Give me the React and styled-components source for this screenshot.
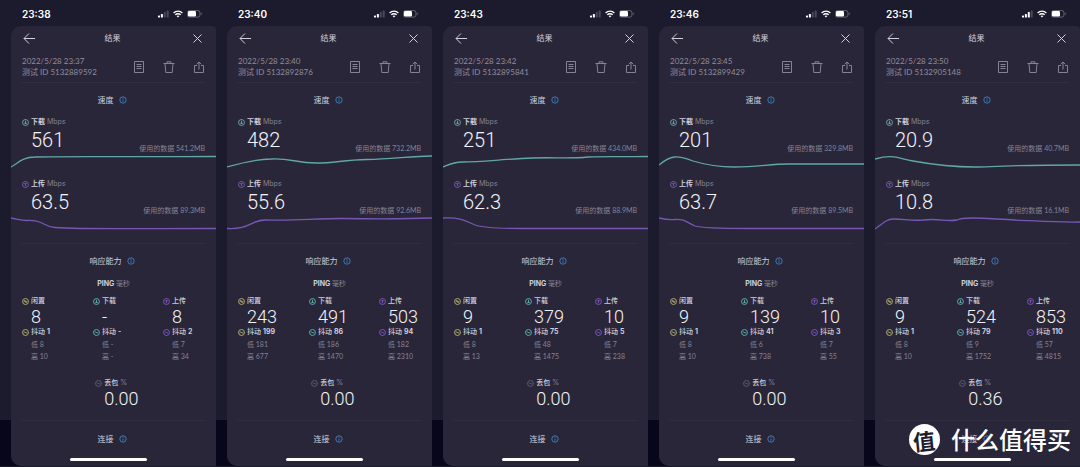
import React from "react";
import styled, { createGlobalStyle } from "styled-components";

const Global = createGlobalStyle`
  *, *::before, *::after { box-sizing: border-box; }
  body { margin: 0; background: #1c1a2d; }
  h1, h2, h3, p { margin: 0; font-weight: inherit; font-size: inherit; }
  button { border: 0; padding: 0; background: none; color: inherit; font: inherit; display: flex; cursor: pointer; }
`;

const Page = styled.main`
  position: relative;
  display: grid;
  grid-template-columns: repeat(5, 1fr);
  overflow: hidden;
  font-family: Lato, "Noto Sans CJK SC", sans-serif;
  font-size: 7px;
  line-height: 12px;
  color: #d0cfda;
  background: linear-gradient(to top, #08061a 46px, #1c1a2d 46px);
`;

const Phone = styled.section`
  display: flex;
  flex-direction: column;
  padding-left: 11px;
`;

const StatusBar = styled.header`
  display: flex;
  align-items: center;
  justify-content: space-between;
  height: 26px;
  padding: 2px 14px 0 11px;
  color: #fff;
  font: 600 10px/14px Inter, sans-serif;
`;

const StatusIcons = styled.div`
  display: flex;
  align-items: center;
  gap: 4px;
`;

const Card = styled.article`
  background: #292639;
  border-radius: 10px 4px 0 10px;
`;

const TitleBar = styled.div`
  display: grid;
  grid-template-columns: 1fr auto 1fr;
  align-items: center;
  height: 24px;
  padding: 0 14px 0 12px;
  font-size: 8px;

  button:last-child { justify-self: end; }
`;

const Meta = styled.div`
  display: flex;
  justify-content: space-between;
  align-items: center;
  margin: 0 11px;
  height: 33px;
  padding-top: 2px;
  border-bottom: 1px solid #312e42;
  color: #8f8d9e;
  font-size: 8px;
  line-height: 11px;
`;

const Tools = styled.div`
  display: flex;
  gap: 18px;
`;

const Heading = styled.h2`
  display: flex;
  align-items: center;
  justify-content: center;
  gap: 5px;
  height: ${(p) => p.$height}px;
  padding-right: 3px;
  font-size: 8px;
`;

const Speed = styled.section`
  height: 62px;
`;

const Label = styled.h3`
  display: flex;
  align-items: center;
  gap: 2px;
  font-family: Inter, "Noto Sans CJK SC", sans-serif;
  font-weight: ${(p) => (p.$strong ? 700 : 500)};
  white-space: nowrap;

  b { font-weight: 700; }
  span { color: #858394; font-weight: 400; }
`;

const SpeedLabel = styled(Label)`
  padding-left: 11px;
`;

const Figure = styled.p`
  font-family: Roboto, sans-serif;
  font-weight: 300;
  font-size: ${(p) => (p.$large ? 20 : 18)}px;
  line-height: ${(p) => (p.$large ? 24 : 19)}px;
  color: #f4f4f8;
`;

const Reading = styled.div`
  display: flex;
  justify-content: space-between;
  height: 26px;
  padding: 0 11px 0 20px;
`;

const Used = styled.p`
  align-self: flex-end;
  color: #858394;
`;

const Chart = styled.svg`
  display: block;
  width: 100%;
  height: 18px;
`;

const Section = styled.section`
  margin: 0 11px;
  border-top: 1px solid #312e42;
`;

const Responsiveness = styled(Section)`
  margin-top: 3px;
`;

const PingTitle = styled.h3`
  padding-bottom: 5px;
  text-align: center;
  font-family: Inter, "Noto Sans CJK SC", sans-serif;
  font-weight: 700;

  span { color: #858394; font-weight: 400; }
`;

const PingGrid = styled.div`
  display: grid;
  grid-template-columns: 71fr 70fr 42fr;
`;

const Detail = styled.div`
  padding-left: 9px;
`;

const Range = styled.p`
  color: #858394;
`;

const Loss = styled.div`
  width: max-content;
  margin: 15px 0 0 40%;
  padding-bottom: 12px;
`;

const Footer = styled.footer`
  position: relative;
  height: 46px;
`;

const HomeBar = styled.div`
  position: absolute;
  left: 50%;
  bottom: 5px;
  width: 77px;
  height: 3px;
  margin-left: -44px;
  border-radius: 2px;
  background: #fff;
`;

const Watermark = styled.div`
  position: absolute;
  right: 9px;
  bottom: 11px;
  display: flex;
  align-items: center;
  gap: 11px;
  color: #fff;
  font: 500 24px/32px "Noto Sans CJK SC", sans-serif;
`;

const Seal = styled.span`
  display: grid;
  place-items: center;
  width: 31px;
  height: 31px;
  border-radius: 50%;
  background: #fff;
  color: #201d30;
  font-size: 22px;

  b { transform: rotate(-6deg); font-weight: 700; }
`;

const TEAL = "#6cc5c1";
const PURPLE = "#8a62d0";
const YELLOW = "#d0cc76";

const marks = {
  down: "M4 2v3.6M2.5 4.3 4 5.8 5.5 4.3",
  up: "M4 6V2.4M2.5 3.7 4 2.2 5.5 3.7",
  idle: "M2.2 4.6 3.2 2.6 4.8 5.4 5.8 3.4",
  jitter: "M1.8 4.2 3 3.5 4.8 4.6 6.2 3.8",
};

function Mark({ kind, color }) {
  return (
    <svg width="7" height="7" viewBox="0 0 8 8" fill="none" stroke={color} strokeWidth="0.9" aria-hidden="true">
      <circle cx="4" cy="4" r="3.4" />
      <path d={marks[kind]} />
    </svg>
  );
}

function Info() {
  return (
    <svg width="8" height="8" viewBox="0 0 8 8" fill="none" stroke="#3f83bd" strokeWidth="0.9" aria-hidden="true">
      <circle cx="4" cy="4" r="3.2" />
      <path d="M4 3.6v2.2M4 2.1v.8" />
    </svg>
  );
}

function Signal({ bars }) {
  return (
    <svg width="11" height="8" viewBox="0 0 11 8" aria-hidden="true">
      {[2, 3.5, 5.5, 7].map((h, i) => (
        <rect key={h} x={i * 2.9} y={7.5 - h} width="2" height={h} rx="0.5" fill={i < bars ? "#fff" : "#4a4859"} />
      ))}
    </svg>
  );
}

function Wifi() {
  return (
    <svg width="10" height="8" viewBox="0 0 10 8" fill="none" stroke="#fff" strokeWidth="1.3" aria-hidden="true">
      <path d="M.6 3a6.2 6.2 0 0 1 8.8 0M2.3 4.9a3.8 3.8 0 0 1 5.4 0" />
      <path d="M3.6 6.100 5 7.6 6.4 6.100A2 2 0 0 0 3.6 6.100Z" fill="#fff" stroke="none" />
    </svg>
  );
}

function Battery({ level }) {
  return (
    <svg width="15" height="8" viewBox="0 0 15 8" aria-hidden="true">
      <rect x=".5" y=".5" width="12.4" height="6.6" rx="2" fill="none" stroke="#74727f" strokeWidth=".8" />
      <rect x="1" y="1" width={level} height="5.6" rx="1.3" fill="#fff" />
      <path d="M13.8 2.6v2.4q1-.4 1-1.2t-1-1.2" fill="#74727f" />
    </svg>
  );
}

function Glyph({ d, width, height, weight = 1 }) {
  return (
    <svg width={width} height={height} viewBox={`0 0 ${width} ${height}`} fill="none" stroke="currentColor" strokeWidth={weight} aria-hidden="true">
      <path d={d} />
    </svg>
  );
}

function SpeedRow({ up, value, used, line }) {
  const color = up ? PURPLE : TEAL;
  return (
    <Speed>
      <SpeedLabel $strong>
        <Mark kind={up ? "up" : "down"} color={color} />
        {up ? "上传" : "下载"}
        <span>Mbps</span>
      </SpeedLabel>
      <Reading>
        <Figure $large>{value}</Figure>
        <Used>使用的数据 {used}MB</Used>
      </Reading>
      <Chart viewBox="0 0 205 18" preserveAspectRatio="none" aria-hidden="true">
        <path d={line} fill="none" stroke={color} strokeWidth="1.3" opacity="0.82" />
      </Chart>
    </Speed>
  );
}

const pingKinds = [
  { name: "闲置", kind: "idle", color: YELLOW },
  { name: "下载", kind: "down", color: TEAL },
  { name: "上传", kind: "up", color: PURPLE },
];

const results = [
  {
    clock: "23:38", bars: 2, date: "2022/5/28 23:37", id: "5132889592",
    down: ["561", "541.2", "M0 13C7 9 12 3 24 3C60 2 120 3 205 2.5"],
    up: ["63.5", "89.3", "M0 2C6 3 10 4.500 16 4.500C22 4 26 5 30 6.500C35 9 37 11 44 11.500C70 13.500 130 12.500 205 12.500"],
    ping: [["8", "1", "8", "10"], ["-", "-", "-", "-"], ["8", "2", "7", "34"]], loss: "0.00",
  },
  {
    clock: "23:40", bars: 2, date: "2022/5/28 23:40", id: "5132892876",
    down: ["482", "732.2", "M0 13C14 9 30 5 44 5C64 4 68 9 90 9C108 9 116 6 140 5.500C165 5 185 2 205 2"],
    up: ["55.6", "92.6", "M0 12.500C22 14 24 4 38 4C70 5 85 2.500 115 2.500C150 3 180 3 205 2"],
    ping: [["243", "199", "181", "677"], ["491", "86", "186", "1470"], ["503", "94", "182", "2310"]], loss: "0.00",
  },
  {
    clock: "23:43", bars: 2, date: "2022/5/28 23:42", id: "5132895841",
    down: ["251", "434.0", "M0 13C7 10 10 8 20 8C40 8 60 5 90 4C110 3 125 5 145 3C165 2 185 3 205 2.500"],
    up: ["62.3", "88.9", "M0 2C20 1 24 6 32 9C40 12 55 12.500 80 12.500H205"],
    ping: [["9", "1", "8", "13"], ["379", "75", "48", "1475"], ["10", "5", "7", "238"]], loss: "0.00",
  },
  {
    clock: "23:46", bars: 2, date: "2022/5/28 23:45", id: "5132899429",
    down: ["201", "329.8", "M0 11C12 1 18 1 34 7C44 10 60 13 75 13C100 13 110 10 130 10H205"],
    up: ["63.7", "89.5", "M0 2C8 4 12 4 16 3.500C26 3 27 6 36 10C42 12 70 12.500 90 12.500H205"],
    ping: [["9", "1", "8", "10"], ["139", "41", "6", "738"], ["10", "3", "7", "55"]], loss: "0.00",
  },
  {
    clock: "23:51", bars: 3, date: "2022/5/28 23:50", id: "5132905148",
    down: ["20.9", "40.7", "M0 5C18 0 22 4 38 7C60 11 75 13 100 13C115 13 130 11 205 11"],
    up: ["10.8", "16.1", "M0 13C8 7 12 3 18 3C30 3 35 5 48 4C65 2 70 6 82 4C90 0 115 3 140 4C165 5 180 6.500 205 6"],
    ping: [["9", "1", "8", "10"], ["524", "79", "9", "1752"], ["853", "110", "57", "4815"]], loss: "0.36",
  },
];

function Result({ r }) {
  return (
    <Phone>
      <StatusBar>
        {r.clock}
        <StatusIcons>
          <Signal bars={r.bars} />
          <Wifi />
          <Battery level={8} />
        </StatusIcons>
      </StatusBar>
      <Card>
        <TitleBar>
          <button aria-label="返回"><Glyph width={12} height={11} d="M6 .5 1 5.500 6 10.500M1 5.500H12" /></button>
          <h1>结果</h1>
          <button aria-label="关闭"><Glyph width={9} height={9} d="M.5 .5 8.500 8.500M8.500 .5 .5 8.500" /></button>
        </TitleBar>
        <Meta>
          <div>
            <p>{r.date}</p>
            <p>测试 ID {r.id}</p>
          </div>
          <Tools>
            <button aria-label="详情"><Glyph width={12} height={12} weight={0.9} d="M1.500 .5H10.500V11.500H1.500ZM3.500 3.500H8.500M3.500 5.500H8.500M3.500 7.500H8.500" /></button>
            <button aria-label="删除"><Glyph width={12} height={12} weight={0.9} d="M.5 2.500H11.500M4 2.500V.8H8V2.500M2 2.500 2.800 11.500H9.200L10 2.500" /></button>
            <button aria-label="分享"><Glyph width={12} height={12} weight={0.9} d="M4 4.500H1.500V11.500H10.500V4.500H8M6 8.500V1M3.800 3.200 6 1 8.200 3.200" /></button>
          </Tools>
        </Meta>
        <Heading $height={33}>速度<Info /></Heading>
        <SpeedRow value={r.down[0]} used={r.down[1]} line={r.down[2]} />
        <SpeedRow up value={r.up[0]} used={r.up[1]} line={r.up[2]} />
        <Responsiveness>
          <Heading $height={34}>响应能力<Info /></Heading>
          <PingTitle>PING <span>毫秒</span></PingTitle>
          <PingGrid>
            {pingKinds.map((k, i) => {
              const [value, jitter, low, high] = r.ping[i];
              return (
                <div key={k.kind}>
                  <Label><Mark kind={k.kind} color={k.color} />{k.name}</Label>
                  <Detail><Figure>{value}</Figure></Detail>
                  <Label><Mark kind="jitter" color={k.color} />抖动<b>{jitter}</b></Label>
                  <Detail>
                    <Range>低 {low}</Range>
                    <Range>高 {high}</Range>
                  </Detail>
                </div>
              );
            })}
          </PingGrid>
          <Loss>
            <Label><Mark kind="jitter" color="#696777" />丢包<span>%</span></Label>
            <Detail><Figure>{r.loss}</Figure></Detail>
          </Loss>
        </Responsiveness>
        <Footer>
          <Section><Heading $height={36}>连接<Info /></Heading></Section>
          <HomeBar />
        </Footer>
      </Card>
    </Phone>
  );
}

export default function App() {
  return (
    <>
      <Global />
      <Page>
        {results.map((r) => <Result key={r.id} r={r} />)}
        <Watermark><Seal><b>值</b></Seal>什么值得买</Watermark>
      </Page>
    </>
  );
}
